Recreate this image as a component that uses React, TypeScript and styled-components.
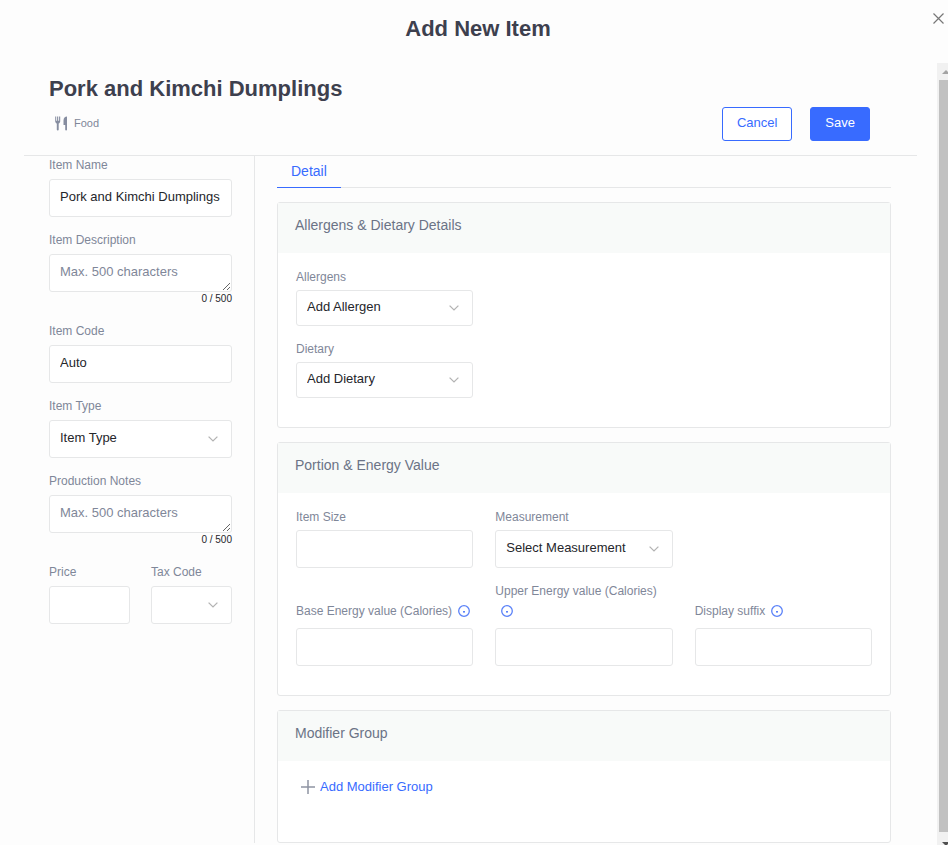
import React, { useId, useState } from "react";
import styled, { createGlobalStyle, css } from "styled-components";

const color = {
  page: "#fdfdfd",
  line: "#e6e7e8",
  heading: "#3d404e",
  label: "#7f8799",
  cardTitle: "#6b7386",
  text: "#25262b",
  blue: "#386bff",
  chevron: "#b3b3b3",
};

const GlobalStyle = createGlobalStyle`
  *, *::before, *::after { box-sizing: border-box; }
  body {
    margin: 0;
    background: ${color.page};
    font-family: "Liberation Sans", Arial, sans-serif;
    font-size: 13px;
    color: ${color.text};
  }
  button, input, select, textarea { font: inherit; color: inherit; }
`;

const Modal = styled.div`
  display: flex;
  flex-direction: column;
  height: 100vh;
  overflow: hidden;
`;

const ModalHeader = styled.header`
  flex: none;
  display: grid;
  grid-template-columns: 40px 1fr 32px;
  height: 63px;
`;

const ModalTitle = styled.h1`
  grid-column: 2;
  margin: 15px 0 0;
  font-size: 22px;
  line-height: 28px;
  text-align: center;
  color: ${color.heading};
`;

const CloseButton = styled.button`
  align-self: start;
  justify-self: end;
  display: flex;
  margin-top: 9px;
  padding: 4px;
  border: 0;
  background: none;
`;

const ModalBody = styled.div`
  flex: 1;
  display: flex;
  min-height: 0;
`;

const Content = styled.div`
  flex: 1;
  display: flex;
  flex-direction: column;
  min-width: 0;
  padding: 0 20px 2px 24px;
  overflow: hidden;
`;

const ItemHeader = styled.div`
  flex: none;
  display: flex;
  align-items: flex-end;
  justify-content: space-between;
  padding: 12px 47px 14px 25px;
  border-bottom: 1px solid ${color.line};
`;

const ItemTitle = styled.h2`
  margin: 0;
  font-size: 22px;
  line-height: 28px;
  color: ${color.heading};
`;

const Category = styled.div`
  display: flex;
  align-items: center;
  gap: 6px;
  margin: 12px 0 10px 6px;
  font-size: 11px;
  line-height: 16px;
  color: ${color.label};
`;

const Actions = styled.div`
  display: flex;
  gap: 18px;
`;

const ActionButton = styled.button<{ $primary?: boolean }>`
  height: 34px;
  padding: 0 14px 3px;
  border: 1px solid ${color.blue};
  border-radius: 3px;
  background: ${(p) => (p.$primary ? color.blue : "#fff")};
  color: ${(p) => (p.$primary ? "#fff" : color.blue)};
`;

const Columns = styled.div`
  flex: 1;
  display: grid;
  grid-template-columns: 231px minmax(0, 1fr);
  min-height: 0;
`;

const Sidebar = styled.aside`
  display: flex;
  flex-direction: column;
  gap: 14px;
  padding: 0 22px 0 25px;
  border-right: 1px solid ${color.line};
`;

const SplitRow = styled.div`
  display: grid;
  grid-template-columns: 1fr 1fr;
  gap: 21px;
`;

const Main = styled.main`
  padding: 0 26px 0 22px;
`;

const Tabs = styled.div`
  display: flex;
  height: 32px;
  margin-bottom: 14px;
  border-bottom: 1px solid ${color.line};
`;

const Tab = styled.button`
  height: 32px;
  padding: 0 14px 1px;
  border: 0;
  border-bottom: 1px solid ${color.blue};
  background: none;
  font-size: 14px;
  color: ${color.blue};
`;

const Card = styled.section`
  border: 1px solid ${color.line};
  border-radius: 3px;
  background: #fff;
  & + & { margin-top: 14px; }
`;

const CardTitle = styled.h3`
  height: 50px;
  margin: 0;
  padding: 12px 17px;
  background: #f8faf9;
  font-size: 14px;
  font-weight: 400;
  line-height: 20px;
  color: ${color.cardTitle};
`;

const CardGrid = styled.div<{ $stacked?: boolean }>`
  display: grid;
  grid-template-columns: repeat(3, minmax(0, 1fr));
  align-items: end;
  gap: ${(p) => (p.$stacked ? "14px" : "13px")} 22px;
  padding: 15px 18px 29px;
  ${(p) => p.$stacked && css`& > * { grid-column: 1; }`}
`;

const CardActions = styled.div`
  height: 81px;
  padding: 16px 23px;
`;

const AddLink = styled.button`
  display: flex;
  align-items: center;
  gap: 5px;
  padding: 0;
  border: 0;
  background: none;
  line-height: 20px;
  color: ${color.blue};
`;

const FieldBox = styled.div<{ $wide?: boolean }>`
  display: flex;
  flex-direction: column;
  gap: ${(p) => (p.$wide ? "7px" : "4px")};
`;

const SideField = styled(FieldBox)`
  gap: 5px;
`;

const Label = styled.label<{ $wide?: boolean }>`
  font-size: 12px;
  line-height: ${(p) => (p.$wide ? "20px" : "18px")};
  color: ${color.label};
`;

const control = css`
  display: block;
  width: 100%;
  padding: 0 10px 3px;
  border: 1px solid ${color.line};
  border-radius: 3px;
  outline: none;
  background: #fff;
  &:focus { border-color: ${color.blue}; }
`;

const Input = styled.input`
  ${control}
  height: 38px;
`;

const TextArea = styled.textarea`
  ${control}
  height: 38px;
  padding: 8px 10px;
  line-height: 18px;
  resize: vertical;
  overflow: hidden;
  &::placeholder { color: ${color.label}; opacity: 1; }
`;

const Counter = styled.div`
  margin-top: -5px;
  padding-bottom: 2px;
  font-size: 10px;
  line-height: 14px;
  text-align: right;
`;

const SelectWrap = styled.div`
  display: grid;
  align-items: center;
  & > * { grid-area: 1 / 1; }
  & > svg {
    justify-self: end;
    margin-right: 14px;
    pointer-events: none;
  }
`;

const Select = styled.select<{ $short?: boolean }>`
  ${control}
  appearance: none;
  height: ${(p) => (p.$short ? "36px" : "38px")};
`;

const InfoIcon = styled.svg`
  margin-left: 6px;
  vertical-align: -2px;
`;

const ScrollRail = styled.div`
  flex: none;
  display: flex;
  flex-direction: column;
  width: 11px;
  padding-left: 2px;
  overflow: hidden;
  background: #f1f1f1;
`;

const ScrollThumb = styled.div`
  flex: 1;
  background: #c1c1c1;
`;

const ScrollArrow = styled.svg`
  flex: none;
  display: block;
`;

const Chevron = () => (
  <svg width="10" height="6" viewBox="0 0 10 6" aria-hidden="true">
    <path d="M0.6 0.6 5 4.9 9.4 0.6" fill="none" stroke={color.chevron} strokeWidth="1.3" />
  </svg>
);

const Info = () => (
  <InfoIcon width="12" height="12" viewBox="0 0 12 12" aria-hidden="true">
    <circle cx="6" cy="6" r="5.3" fill="none" stroke="#5b82f8" strokeWidth="1.3" />
    <rect x="5" y="6" width="2" height="1.6" fill="#5b82f8" />
  </InfoIcon>
);

const Cutlery = () => (
  <svg width="13" height="15" viewBox="0 0 13 15" fill="#868da0" aria-hidden="true">
    <path d="M0.2 0.5h1v4.2h.9V.5h1.1v4.2h.9V.5h1.1v4.500c0 1.400-.6 2.100-1.500 2.500v6.200c0 .5-.3.8-.9.8s-1-.3-1-.8V7.500C.9 7.100.2 6.400.2 5z" />
    <path d="M12 .5v13.200c0 .5-.3.8-.9.8s-.9-.3-.9-.8V9H8.500V4.500C8.500 2 10 .5 12 .5z" />
  </svg>
);

type FieldProps = {
  label: string;
  side?: boolean;
  info?: boolean;
};

function TextField({ label, side, info, value = "" }: FieldProps & { value?: string }) {
  const id = useId();
  const [current, setCurrent] = useState(value);
  const Box = side ? SideField : FieldBox;
  return (
    <Box $wide={info}>
      <Label htmlFor={id} $wide={info}>
        {label}
        {info && <Info />}
      </Label>
      <Input id={id} value={current} onChange={(e) => setCurrent(e.target.value)} />
    </Box>
  );
}

function NotesField({ label }: FieldProps) {
  const id = useId();
  const [current, setCurrent] = useState("");
  return (
    <SideField>
      <Label htmlFor={id}>{label}</Label>
      <TextArea
        id={id}
        maxLength={500}
        placeholder="Max. 500 characters"
        value={current}
        onChange={(e) => setCurrent(e.target.value)}
      />
      <Counter>{current.length} / 500</Counter>
    </SideField>
  );
}

function SelectField({ label, side, short, option = "" }: FieldProps & { option?: string; short?: boolean }) {
  const id = useId();
  const Box = side ? SideField : FieldBox;
  return (
    <Box>
      <Label htmlFor={id}>{label}</Label>
      <SelectWrap>
        <Select id={id} $short={short}>
          <option>{option}</option>
        </Select>
        <Chevron />
      </SelectWrap>
    </Box>
  );
}

export default function App() {
  return (
    <>
      <GlobalStyle />
      <Modal role="dialog" aria-labelledby="modal-title">
        <ModalHeader>
          <ModalTitle id="modal-title">Add New Item</ModalTitle>
          <CloseButton type="button" aria-label="Close">
            <svg width="11" height="11" viewBox="0 0 11 11" aria-hidden="true">
              <path d="M.5.5l10 10M10.5.5l-10 10" stroke="#777" strokeWidth="1.2" fill="none" />
            </svg>
          </CloseButton>
        </ModalHeader>
        <ModalBody>
          <Content>
            <ItemHeader>
              <div>
                <ItemTitle>Pork and Kimchi Dumplings</ItemTitle>
                <Category>
                  <Cutlery />
                  Food
                </Category>
              </div>
              <Actions>
                <ActionButton type="button">Cancel</ActionButton>
                <ActionButton type="button" $primary>Save</ActionButton>
              </Actions>
            </ItemHeader>
            <Columns>
              <Sidebar>
                <TextField side label="Item Name" value="Pork and Kimchi Dumplings" />
                <NotesField label="Item Description" />
                <TextField side label="Item Code" value="Auto" />
                <SelectField side label="Item Type" option="Item Type" />
                <NotesField label="Production Notes" />
                <SplitRow>
                  <TextField side label="Price" />
                  <SelectField side label="Tax Code" />
                </SplitRow>
              </Sidebar>
              <Main>
                <Tabs role="tablist">
                  <Tab type="button" role="tab" aria-selected="true">Detail</Tab>
                </Tabs>
                <Card>
                  <CardTitle>Allergens &amp; Dietary Details</CardTitle>
                  <CardGrid $stacked>
                    <SelectField short label="Allergens" option="Add Allergen" />
                    <SelectField short label="Dietary" option="Add Dietary" />
                  </CardGrid>
                </Card>
                <Card>
                  <CardTitle>Portion &amp; Energy Value</CardTitle>
                  <CardGrid>
                    <TextField label="Item Size" />
                    <SelectField label="Measurement" option="Select Measurement" />
                    <span />
                    <TextField info label="Base Energy value (Calories)" />
                    <TextField info label="Upper Energy value (Calories)" />
                    <TextField info label="Display suffix" />
                  </CardGrid>
                </Card>
                <Card>
                  <CardTitle>Modifier Group</CardTitle>
                  <CardActions>
                    <AddLink type="button">
                      <svg width="14" height="14" viewBox="0 0 14 14" aria-hidden="true">
                        <path d="M7 0v14M0 7h14" stroke="#8f94a3" strokeWidth="1.5" />
                      </svg>
                      Add Modifier Group
                    </AddLink>
                  </CardActions>
                </Card>
              </Main>
            </Columns>
          </Content>
          <ScrollRail aria-hidden="true">
            <ScrollArrow width="15" height="17" viewBox="0 0 15 17">
              <path d="M3 11l4-4 4 4z" fill="#a3a3a3" />
            </ScrollArrow>
            <ScrollThumb />
            <ScrollArrow width="15" height="13" viewBox="0 0 15 13">
              <path d="M3 10l4 4 4-4z" fill="#505050" />
            </ScrollArrow>
          </ScrollRail>
        </ModalBody>
      </Modal>
    </>
  );
}
